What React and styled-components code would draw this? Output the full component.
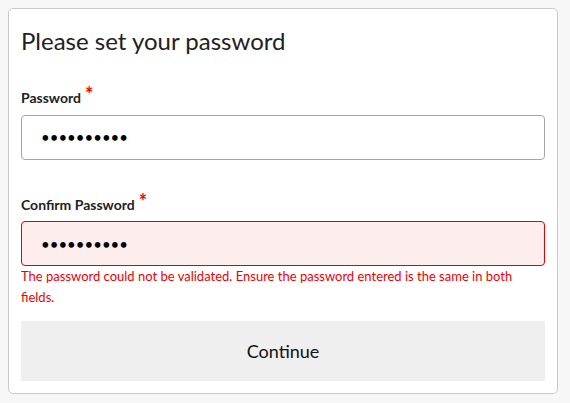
import React from "react";
import styled, { createGlobalStyle } from "styled-components";

const Global = createGlobalStyle`
  html, body {
    margin: 0;
    background: #f7f7f7;
  }
  body {
    padding: 8px;
    font-family: Lato, "Open Sans", sans-serif;
    color: #222;
  }
  * { box-sizing: border-box; }
`;

const Card = styled.form`
  width: 550px;
  background: #fff;
  border: 1px solid #cbcbcb;
  border-radius: 5px;
  padding: 18px 12px 12px 12px;
  display: flex;
  flex-direction: column;
`;

const Title = styled.h1`
  margin: 0;
  font-size: 24px;
  font-weight: 400;
  line-height: 1.2;
  color: #222;
`;

const Field = styled.div`
  display: flex;
  flex-direction: column;
  margin-top: ${(p) => p.$gap}px;
`;

const Label = styled.label`
  font-size: 14px;
  font-weight: 700;
  line-height: 1.2;
  color: #222;
  margin-bottom: 8px;
`;

const Required = styled.span`
  color: #ff0000;
  font-size: 20px;
  font-weight: 700;
  line-height: 0;
  margin-left: 4px;
  position: relative;
  top: -1px;
`;

const Input = styled.input`
  height: 45px;
  width: 100%;
  border: 1px solid ${(p) => (p.$invalid ? "#e60000" : "#a6a6a6")};
  background: ${(p) => (p.$invalid ? "#fdeded" : "#fff")};
  border-radius: 4px;
  padding: 0 19px;
  font-family: Lato, sans-serif;
  font-size: 15px;
  color: #000;
  outline: none;
`;

const ErrorText = styled.div`
  color: #f00000;
  font-size: 13px;
  line-height: 21px;
`;

const Button = styled.button`
  margin-top: 13px;
  height: 60px;
  width: 100%;
  border: none;
  background: #efefef;
  font-family: Lato, sans-serif;
  font-size: 18px;
  color: #111;
  cursor: pointer;
`;

export default function App() {
  return (
    <>
      <Global />
      <Card onSubmit={(e) => e.preventDefault()}>
        <Title>Please set your password</Title>
        <Field $gap={34}>
          <Label>
            Password<Required>*</Required>
          </Label>
          <Input type="password" defaultValue="password12" readOnly />
        </Field>
        <Field $gap={37}>
          <Label>
            Confirm Password<Required>*</Required>
          </Label>
          <Input type="password" defaultValue="password13" readOnly $invalid />
          <ErrorText>
            The password could not be validated. Ensure the password entered is the same in both fields.
          </ErrorText>
        </Field>
        <Button type="submit">Continue</Button>
      </Card>
    </>
  );
}
